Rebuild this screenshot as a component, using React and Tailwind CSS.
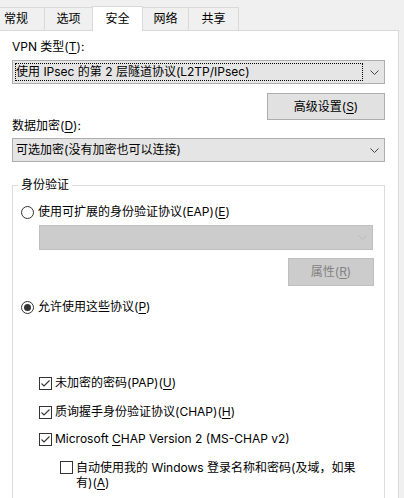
import clsx from "clsx";

const Chevron = ({ disabled }) => (
    <svg width="9" height="5" viewBox="0 0 9 5" className="block">
        <path d="M0.5 0.5 L4.5 4.5 L8.5 0.5" fill="none" stroke={disabled ? "#b8b8b8" : "#444"} strokeWidth="1" />
    </svg>
);

const Key = ({ children }) => <u className="underline underline-offset-[2px] decoration-1">{children}</u>;

const Select = ({ children, focus, disabled, className }) => (
    <div className={clsx("flex items-stretch border", disabled ? "bg-[#cccccc] border-[#bfbfbf]" : "bg-[#e5e5e5] border-[#adadad]", className)}>
        <div className="flex-1 p-[2px]">
            <div className={clsx("h-full flex items-center leading-[16px]", focus ? "border border-dotted border-black" : "pl-[1px]")}>
                {children}
            </div>
        </div>
        <div className="w-[19px] flex items-center justify-center pr-[1px]">
            <Chevron disabled={disabled} />
        </div>
    </div>
);

const Button = ({ children, disabled, className }) => (
    <div className={clsx("flex items-center justify-center border leading-[16px]", disabled ? "bg-[#cccccc] border-[#bfbfbf] text-[#838383]" : "bg-[#e1e1e1] border-[#adadad]", className)}>
        {children}
    </div>
);

const Radio = ({ checked }) => (
    <span className="w-[13px] h-[13px] rounded-full border border-[#333333] bg-white flex items-center justify-center shrink-0">
        {checked && <span className="w-[7px] h-[7px] rounded-full bg-[#333333]" />}
    </span>
);

const Check = ({ checked, className }) => (
    <span className={clsx("w-[13px] h-[13px] border border-[#333333] bg-white flex items-center justify-center shrink-0", className)}>
        {checked && (
            <svg width="11" height="11" viewBox="0 0 11 11">
                <path d="M1.5 5.5 L4 8 L9.5 2.5" fill="none" stroke="#333" strokeWidth="1.1" />
            </svg>
        )}
    </span>
);

const tabs = [
    { label: "常规", w: "w-[45px]", cls: "justify-start pl-[4px] border-r" },
    { label: "选项", w: "w-[47px]", cls: "justify-center" },
    { label: "安全", w: "w-[51px]", active: true },
    { label: "网络", w: "w-[46px]", cls: "justify-center border-r bg-[#d8e6f2] border-[#c8d9ea]" },
    { label: "共享", w: "w-[50px]", cls: "justify-center border-r" },
];

export default function App() {
    return (
        <div className="w-[404px] h-[498px] overflow-hidden bg-[#f0f0f0] text-[12px] text-black font-[family-name:Inter,'Noto_Sans_CJK_SC',sans-serif]">
            {/* tab strip */}
            <div className="h-[30px] flex items-end">
                {tabs.map((t) =>
                    t.active ? (
                        <div key={t.label} className={clsx(t.w, "relative z-10 h-[25px] mb-[-1px] bg-white border-l border-r border-t border-[#d9d9d9] flex items-center justify-center pb-[1px] leading-[16px]")}>
                            {t.label}
                        </div>
                    ) : (
                        <div key={t.label} className={clsx(t.w, "h-[23px] border-t border-[#d9d9d9] bg-[#f0f0f0] flex items-center leading-[16px]", t.cls)}>
                            {t.label}
                        </div>
                    )
                )}
            </div>

            {/* panel */}
            <div className="w-[399px] h-[468px] bg-white border-t border-r border-[#d9d9d9] overflow-hidden">
                <div className="pt-[8px] pl-[12px] pr-[13px]">
                    <div className="leading-[16px]">VPN 类型(<Key>T</Key>):</div>
                    <Select focus className="mt-[5px] h-[24px]">
                        使用 IPsec 的第 2 层隧道协议(L2TP/IPsec)
                    </Select>
                    <div className="flex justify-end mt-[9px]">
                        <Button className="w-[118px] h-[27px]">高级设置(<Key>S</Key>)</Button>
                    </div>
                    <div className="leading-[12px]">数据加密(<Key>D</Key>):</div>
                    <Select className="mt-[6px] h-[24px]">可选加密(没有加密也可以连接)</Select>

                    <fieldset className="mt-[15px] border border-[#dcdcdc] h-[400px]">
                        <legend className="ml-[5px] px-[3px] leading-[16px]">身份验证</legend>
                        <div className="pt-[11px] pl-[8px]">
                            <div className="flex items-center gap-[4px] h-[16px]">
                                <Radio />
                                <span>使用可扩展的身份验证协议(EAP)(<Key>E</Key>)</span>
                            </div>
                            <Select disabled className="mt-[5px] ml-[18px] w-[334px] h-[25px]" />
                            <Button disabled className="mt-[8px] ml-[267px] w-[86px] h-[28px]">属性(<Key>R</Key>)</Button>

                            <div className="mt-[13px] flex items-center gap-[4px] h-[16px]">
                                <Radio checked />
                                <span>允许使用这些协议(<Key>P</Key>)</span>
                            </div>

                            <div className="mt-[60px] ml-[18px] flex items-center gap-[3px] h-[16px]">
                                <Check checked />
                                <span>未加密的密码(PAP)(<Key>U</Key>)</span>
                            </div>
                            <div className="mt-[13px] ml-[18px] flex items-center gap-[3px] h-[16px]">
                                <Check checked />
                                <span>质询握手身份验证协议(CHAP)(<Key>H</Key>)</span>
                            </div>
                            <div className="mt-[11px] ml-[18px] flex items-center gap-[3px] h-[16px]">
                                <Check checked />
                                <span>Microsoft <Key>C</Key>HAP Version 2 (MS-CHAP v2)</span>
                            </div>
                            <div className="mt-[13px] ml-[39px] flex items-start gap-[3px] leading-[15px]">
                                <Check className="mt-[1px]" />
                                <span>
                                    自动使用我的 Windows 登录名称和密码(及域，如果
                                    <br />
                                    有)(<Key>A</Key>)
                                </span>
                            </div>
                        </div>
                    </fieldset>
                </div>
            </div>
        </div>
    );
}
